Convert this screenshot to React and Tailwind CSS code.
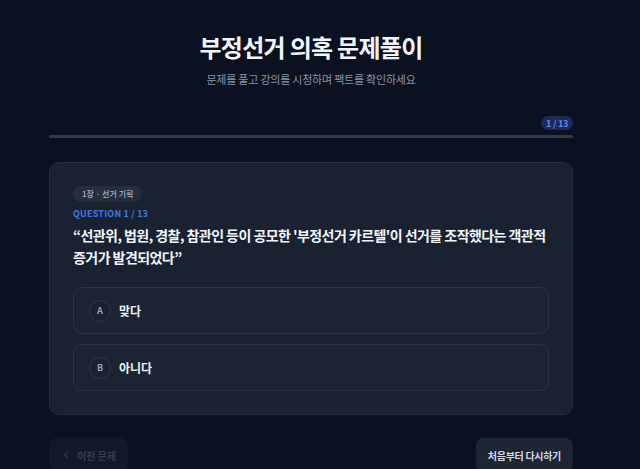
const OPTIONS = [
  { key: 'A', label: '맞다' },
  { key: 'B', label: '아니다' },
];

export default function App() {
  return (
    <div
      className="min-h-[469px] bg-[#0b1120] pr-[18px] text-white"
      style={{ fontFamily: '"Noto Sans CJK KR", "Noto Sans", sans-serif' }}
    >
      <div className="mx-auto w-[524px] pt-[32px]">
        <h1 className="text-center text-[24px] font-bold leading-[30px] tracking-[-0.03em] text-[#f1f5f9]">
          부정선거 의혹 문제풀이
        </h1>
        <p className="mt-[9px] text-center text-[11px] leading-[16px] tracking-[-0.02em] text-[#8b95a7]">
          문제를 풀고 강의를 시청하며 팩트를 확인하세요
        </p>

        {/* progress */}
        <div className="mt-[29px] flex justify-end">
          <span className="flex h-[14px] items-center rounded-full bg-[#1c2a5c] px-[5px] text-[9px] font-semibold leading-none tracking-[-0.03em] text-[#5b8def]">
            1 / 13
          </span>
        </div>
        <div className="mt-[5px] h-[3px] w-full rounded-full bg-[#323a49]" />

        {/* question card */}
        <div className="mt-[24px] rounded-[10px] border border-[#262f3f] bg-[#1a2130] p-[23px]">
          <span className="flex h-[16px] w-fit items-center rounded-full bg-[#252e3f] px-[9px] text-[8px] font-medium leading-none text-[#aeb6c4]">
            1장 · 선거 기획
          </span>
          <div className="mt-[6px] text-[9px] font-bold leading-[12px] tracking-[0.02em] text-[#3b7ae8]">
            QUESTION 1 / 13
          </div>
          <p className="mt-[4px] text-[14px] font-bold leading-[22px] tracking-[-0.04em] text-[#f1f5f9]">
            “선관위, 법원, 경찰, 참관인 등이 공모한 '부정선거 카르텔'이 선거를 조작했다는 객관적 증거가 발견되었다”
          </p>

          <div className="mt-[19px] flex flex-col gap-[10px]">
            {OPTIONS.map((opt) => (
              <button
                key={opt.key}
                className="flex h-[47px] w-full items-center gap-[8px] rounded-[9px] border border-[#2c3547] bg-[#1c2434] px-[15px] text-left"
              >
                <span className="flex h-[22px] w-[22px] items-center justify-center rounded-full border border-[#2f3849] bg-[#1a2130] text-[9px] font-bold text-[#9aa3b3]">
                  {opt.key}
                </span>
                <span className="text-[12px] font-bold text-[#eef2f7]">{opt.label}</span>
              </button>
            ))}
          </div>
        </div>

        {/* navigation */}
        <div className="mt-[23px] flex items-start justify-between">
          <button className="flex h-[34px] items-center gap-[6px] rounded-[8px] bg-[#151c2b] px-[12px] text-[10px] font-medium text-[#4b5568] opacity-80">
            <svg width="10" height="10" viewBox="0 0 24 24" fill="none" stroke="currentColor" strokeWidth="2.5" strokeLinecap="round" strokeLinejoin="round">
              <path d="M15 18l-6-6 6-6" />
            </svg>
            이전 문제
          </button>
          <button className="flex h-[34px] items-center rounded-[8px] bg-[#1e2533] px-[12px] text-[10px] font-bold tracking-[-0.03em] text-[#d5dae2]">
            처음부터 다시하기
          </button>
        </div>
      </div>
    </div>
  );
}
